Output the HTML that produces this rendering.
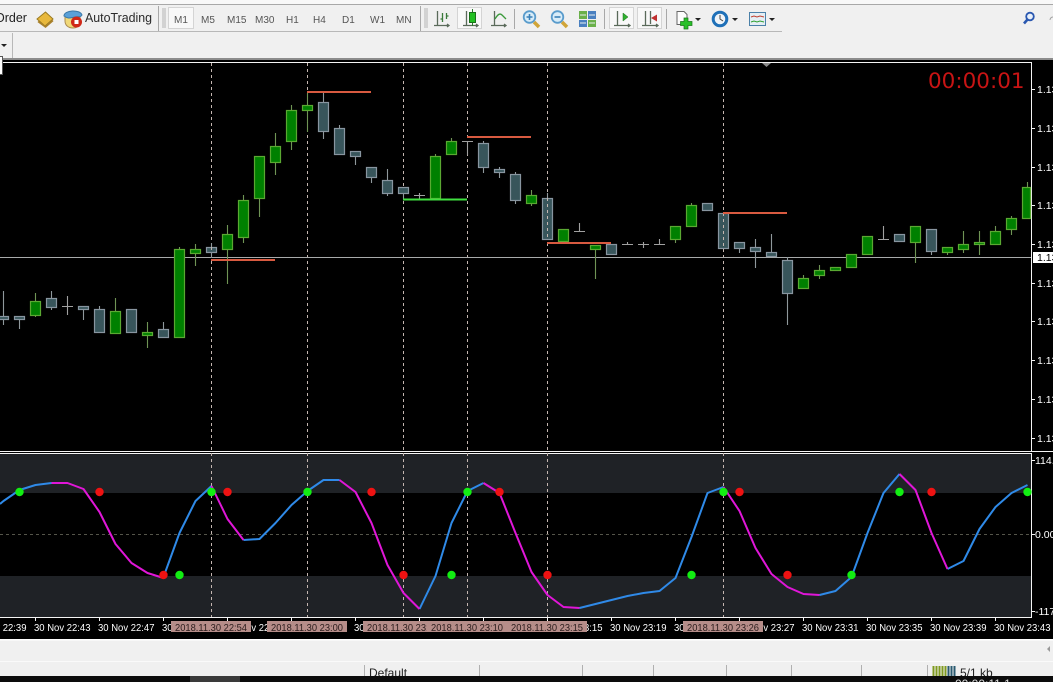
<!DOCTYPE html>
<html><head><meta charset="utf-8"><title>Chart</title>
<style>
html,body{margin:0;padding:0;background:#f0f0f0;width:1053px;height:682px;overflow:hidden}
svg{display:block;position:absolute;left:0;top:0}
.t{font-family:"Liberation Sans",sans-serif}
.w text{font-family:"Liberation Sans",sans-serif;font-size:10.500px;fill:#fff}
.g rect{fill:#008000;stroke:#5aa832;stroke-width:1.200}
.s rect{fill:#38555b;stroke:#8895a0;stroke-width:1.200}
.tb text{font-family:"Liberation Sans",sans-serif;font-size:10px;fill:#555}
</style></head><body>
<svg width="1053" height="682" viewBox="0 0 1053 682" xmlns="http://www.w3.org/2000/svg">
<rect width="1053" height="682" fill="#f0f0f0"/>
<!-- toolbar -->
<rect x="0" y="0" width="1053" height="4" fill="#f8f8f8"/>
<rect x="0" y="4" width="1053" height="1" fill="#a8a8a8"/>
<rect x="0" y="31" width="782" height="1" fill="#b8b8b8"/>
<rect x="158" y="6" width="1" height="25" fill="#a8a8a8"/>
<rect x="420" y="6" width="1" height="25" fill="#a8a8a8"/>
<rect x="12" y="33" width="1" height="25" fill="#b8b8b8"/>
<path d="M1 44h6l-3 3z" fill="#222"/>
<rect x="0" y="58" width="1053" height="2" fill="#8c8c8c"/>
<text x="-5" y="22" class="t" font-size="12.500" fill="#222">Order</text>
<!-- tag icon -->
<path d="M37 19l8.500-7 7.500 7-8 7z" fill="#e8b83c" stroke="#9a7a20"/><path d="M38 21.500l7.500 5.500 7.500-6.500" fill="none" stroke="#a9802a" stroke-width="1.600"/>
<!-- autotrading icon -->
<path d="M65 15c2-4 13-5 15 0v6c-1 5-3 7-7 7-5 0-8-3-8-7z" fill="#f0d878" stroke="#a98a50"/>
<path d="M64 16c0-6 16-7 18-1-2 3-4 1-7 2-5 1-7 2-11-1z" fill="#5aa0d8" stroke="#3a78a8"/>
<circle cx="76.500" cy="22" r="5.500" fill="#d02818"/><rect x="74.500" y="20" width="4" height="4" fill="#fff"/>
<text x="85" y="22" class="t" font-size="12.500" fill="#2a2a2a" textLength="67" lengthAdjust="spacingAndGlyphs">AutoTrading</text>
<!-- grips -->
<path d="M162 9h4M162 11h4M162 13h4M162 15h4M162 17h4M162 19h4M162 21h4M162 23h4M162 25h4M162 27h4M424 9h4M424 11h4M424 13h4M424 15h4M424 17h4M424 19h4M424 21h4M424 23h4M424 25h4M424 27h4" stroke="#b4b4b4"/>
<!-- pressed buttons -->
<g fill="#f8f8f8" stroke="#d4d4d4">
<rect x="168.500" y="7.500" width="25" height="21"/>
<rect x="457.500" y="7.500" width="24" height="21"/>
<rect x="609.500" y="7.500" width="24" height="21"/>
<rect x="637.500" y="7.500" width="24" height="21"/>
</g>
<g class="tb">
<text x="174" y="23">M1</text><text x="201" y="23">M5</text><text x="227" y="23">M15</text><text x="255" y="23">M30</text><text x="286" y="23">H1</text><text x="313" y="23">H4</text><text x="342" y="23">D1</text><text x="370" y="23">W1</text><text x="396" y="23">MN</text>
</g>
<!-- chart type icons -->
<g fill="none">
<path d="M437.500 11v15M434 25.500h15M447 24l2 1.500-2 1.500" stroke="#5a6a5a" stroke-width="1.300"/>
<path d="M442.500 13v9M446.500 13v6M442.500 19h-2M446.500 16h2" stroke="#3a7a3a" stroke-width="1.300"/>
<path d="M466.500 11v15M463 25.500h15M476 24l2 1.500-2 1.500" stroke="#5a6a5a" stroke-width="1.300"/>
<path d="M472.500 9v17" stroke="#2a7a2a"/>
<path d="M494.500 11v15M491 25.500h15M504 24l2 1.500-2 1.500" stroke="#5a6a5a" stroke-width="1.300"/>
<path d="M495 19c3-5 5-6 7-4l4 4" stroke="#3a9a3a" stroke-width="1.300"/>
<path d="M617.500 11v15M614 25.500h16M628 24l2 1.500-2 1.500M645.500 11v15M642 25.500h16M656 24l2 1.500-2 1.500M650.500 11v13" stroke="#5a6a5a" stroke-width="1.300"/>
</g>
<rect x="469.500" y="12.500" width="6" height="10" fill="#22c022" stroke="#1a701a"/>
<path d="M623 13l5 4-5 4z" fill="#30b030" stroke="#1a701a" stroke-width=".5"/>
<path d="M651 18l6-3.500v7z" fill="#c03030"/>
<rect x="514" y="9" width="1" height="20" fill="#a8a8a8"/><rect x="604" y="9" width="1" height="20" fill="#a8a8a8"/><rect x="666" y="9" width="1" height="20" fill="#a8a8a8"/>
<!-- zoom icons -->
<g>
<path d="M534 22l5 5" stroke="#d0a438" stroke-width="3.500"/>
<circle cx="529.500" cy="17" r="5.800" fill="#d8ecf8" stroke="#5a9ccc" stroke-width="1.800"/>
<path d="M526.500 17h6M529.500 14v6" stroke="#3a80b8" stroke-width="1.600"/>
<path d="M562 22l5 5" stroke="#d0a438" stroke-width="3.500"/>
<circle cx="557.500" cy="17" r="5.800" fill="#d8ecf8" stroke="#5a9ccc" stroke-width="1.800"/>
<path d="M554.500 17h6" stroke="#3a80b8" stroke-width="1.600"/>
</g>
<!-- tile icon -->
<rect x="579" y="11" width="8" height="8" fill="#6ab04a"/><rect x="588" y="11" width="8" height="8" fill="#4a80c0"/><rect x="579" y="20" width="8" height="7" fill="#4a80c0"/><rect x="588" y="20" width="8" height="7" fill="#6ab04a"/>
<path d="M580 15h6M589 15h6M580 23h6M589 23h6" stroke="#e8f0f0"/>
<!-- new chart -->
<path d="M677 11.500h7l3 3v10h-10z" fill="#fdfdfd" stroke="#666"/>
<path d="M684 18h4v3.500h4v4h-4v3.500h-4v-3.500h-3.500v-4h3.500z" fill="#28c028" stroke="#187818" stroke-width=".7"/>
<path d="M695 18h6l-3 3z" fill="#222"/>
<!-- clock -->
<circle cx="720" cy="19" r="6.800" fill="#f0f4f8" stroke="#1f70b8" stroke-width="3"/><path d="M720 15v4l3 2" stroke="#444" fill="none"/>
<path d="M732 18h6l-3 3z" fill="#222"/>
<!-- template -->
<rect x="749.500" y="12.500" width="16" height="13" fill="#e4eef4" stroke="#4a80a8"/><path d="M751 17l3-1 3 1 3-1 4 1" stroke="#c04030" fill="none"/><path d="M751 22l3-1 3 1 3-1 4 1" stroke="#30a030" fill="none"/>
<path d="M769 18h6l-3 3z" fill="#222"/>
<!-- search -->
<circle cx="1030" cy="16.500" r="3.800" fill="#e8f0fa" stroke="#2a58b0" stroke-width="1.800"/><path d="M1027.500 19.500l-3.500 4" stroke="#2a58b0" stroke-width="2.600"/>
<path d="M1050 20a3 3 0 0 1 3-3" stroke="#a0a0a0" fill="none"/>
<!-- chart -->
<rect x="0" y="60" width="1053" height="580" fill="#000"/>
<rect x="0" y="62" width="1032" height="1" fill="#f4f4f4"/>
<rect x="1031" y="62" width="1" height="389" fill="#f4f4f4"/>
<rect x="0" y="451" width="1053" height="1" fill="#f4f4f4"/>
<rect x="0" y="453" width="1032" height="1" fill="#f4f4f4"/>
<path d="M762 63h9l-4.500 4z" fill="#8a8a8a"/>
<rect x="-1" y="56.500" width="3.500" height="18" fill="#fff" stroke="#555"/>
<!-- indicator bg -->
<rect x="0" y="454" width="1031" height="39" fill="#1f2226"/>
<rect x="0" y="576" width="1031" height="41" fill="#1f2226"/>
<rect x="1031" y="453" width="1" height="165" fill="#f4f4f4"/>
<rect x="0" y="617" width="1032" height="1" fill="#f4f4f4"/>
<path d="M0 534.500h1031" stroke="#55554a" stroke-dasharray="3 3"/>
<!-- vlines -->
<path d="M211.500 63V617M307.500 63V617M403.500 63V617M467.500 63V617M547.500 63V617M723.500 63V617" stroke="#c4b6b0" stroke-dasharray="3 3"/>
<!-- price line -->
<rect x="0" y="257" width="1031" height="1" fill="#a8aaaa"/>
<!-- wicks -->
<path stroke="#6f9455" stroke-width="1.100" fill="none" d="M35.500 293V317M115.500 298V333M147.500 322V348M179.500 247V338M195.500 244V266M227.500 225V284M243.500 195V243M259.500 156V217M275.500 133V175M291.500 105V150M307.500 93V132M435.500 154V198M451.500 138V155M531.500 190V206M595.500 245V279M675.500 226V243M691.500 203V227M803.500 275V288M819.500 265V279M915.500 226V263M947.500 247V255M963.500 231V253M979.500 231V255M995.500 226V244M1011.500 216V235M1027.500 182V218"/>
<path stroke="#8f989c" stroke-width="1.100" fill="none" d="M3.500 291V325M19.500 316V329M51.500 291V310M83.500 306V320M99.500 306V333M163.500 322V338M211.500 243V258M323.500 93V139M339.500 125V155M355.500 151V165M371.500 167V183M387.500 169V196M403.500 187V199M483.500 141V173M499.500 167V178M515.500 172V204M547.500 193V240M739.500 242V253M755.500 239V268M771.500 234V257M787.500 257V325M931.500 229V255"/>
<path stroke="#a0a0a0" stroke-width="1.100" fill="none" d="M67.500 296V315M62 306.500H73M419.500 193V199M414 195.500H425M467.500 141V155M462 141.500H473M579.500 223V231M574 231.500H585M627.500 242V244M622 244.500H633M643.500 242V248M638 244.500H649M659.500 239V244M654 244.500H665M883.500 226V239M878 239.500H889"/>
<!-- green bodies -->
<g class="g">
<rect x="30.500" y="301.500" width="10" height="14"/><rect x="110.500" y="311.500" width="10" height="22"/><rect x="142.500" y="332.500" width="10" height="3"/><rect x="174.500" y="249.500" width="10" height="88"/><rect x="190.500" y="249.500" width="10" height="4"/><rect x="222.500" y="234.500" width="10" height="15"/><rect x="238.500" y="200.500" width="10" height="37"/><rect x="254.500" y="156.500" width="10" height="42"/><rect x="270.500" y="146.500" width="10" height="16"/><rect x="286.500" y="110.500" width="10" height="31"/><rect x="302.500" y="105.500" width="10" height="5"/><rect x="430.500" y="156.500" width="10" height="42"/><rect x="446.500" y="141.500" width="10" height="13"/><rect x="526.500" y="195.500" width="10" height="8"/><rect x="558.500" y="229.500" width="10" height="12"/><rect x="590.500" y="245.500" width="10" height="4"/><rect x="670.500" y="226.500" width="10" height="13"/><rect x="686.500" y="205.500" width="10" height="21"/><rect x="798.500" y="278.500" width="10" height="10"/><rect x="814.500" y="270.500" width="10" height="5"/><rect x="830.500" y="267.500" width="10" height="3"/><rect x="846.500" y="254.500" width="10" height="13"/><rect x="862.500" y="236.500" width="10" height="18"/><rect x="910.500" y="226.500" width="10" height="16"/><rect x="942.500" y="247.500" width="10" height="5"/><rect x="958.500" y="244.500" width="10" height="5"/><rect x="974.500" y="242.500" width="10" height="2"/><rect x="990.500" y="231.500" width="10" height="13"/><rect x="1006.500" y="218.500" width="10" height="11"/><rect x="1022.500" y="187.500" width="8" height="31"/>
</g>
<!-- grey bodies -->
<g class="s">
<rect x="-1.500" y="316.500" width="10" height="3"/><rect x="14.500" y="316.500" width="10" height="3"/><rect x="46.500" y="298.500" width="10" height="9"/><rect x="78.500" y="306.500" width="10" height="3"/><rect x="94.500" y="309.500" width="10" height="23"/><rect x="126.500" y="309.500" width="10" height="23"/><rect x="158.500" y="329.500" width="10" height="8"/><rect x="206.500" y="247.500" width="10" height="5"/><rect x="318.500" y="102.500" width="10" height="29"/><rect x="334.500" y="128.500" width="10" height="26"/><rect x="350.500" y="151.500" width="10" height="5"/><rect x="366.500" y="167.500" width="10" height="10"/><rect x="382.500" y="180.500" width="10" height="13"/><rect x="398.500" y="187.500" width="10" height="6"/><rect x="478.500" y="143.500" width="10" height="24"/><rect x="494.500" y="169.500" width="10" height="3"/><rect x="510.500" y="174.500" width="10" height="26"/><rect x="542.500" y="198.500" width="10" height="41"/><rect x="606.500" y="244.500" width="10" height="10"/><rect x="702.500" y="203.500" width="10" height="7"/><rect x="718.500" y="213.500" width="10" height="35"/><rect x="734.500" y="242.500" width="10" height="6"/><rect x="750.500" y="247.500" width="10" height="4"/><rect x="766.500" y="252.500" width="10" height="4"/><rect x="782.500" y="260.500" width="10" height="33"/><rect x="894.500" y="234.500" width="10" height="7"/><rect x="926.500" y="229.500" width="10" height="22"/>
</g>
<path d="M211.500 247V253M547.500 198V240M723.500 213V249" stroke="#c4b6b0" stroke-dasharray="3 3"/>
<!-- trend lines -->
<g stroke-width="2">
<path d="M307 92H371M467 137H531M723 213H787M547 243H611M211 260H275" stroke="#d85a40"/>
<path d="M403 199.500H467" stroke="#40e040"/>
</g>
<!-- osc -->
<g fill="none" stroke-width="2" stroke-linejoin="round">
<g stroke="#2f8ae8">
<polyline points="0,504 3.500,501 19.500,490 35.500,485 51.500,483"/>
<polyline points="163.500,577 179.500,533 195.500,501 211.500,486"/>
<polyline points="243.500,540 259.500,539 275.500,523 291.500,505 307.500,491 323.500,480 339.500,480"/>
<polyline points="419.500,609 435.500,576 451.500,523 467.500,491 483.500,483"/>
<polyline points="579.500,608 595.500,604 611.500,600 627.500,596 643.500,593 659.500,591 675.500,578 691.500,537 707.500,493 723.500,487"/>
<polyline points="819.500,595 835.500,591 851.500,577 867.500,533 883.500,493 899.500,474"/>
<polyline points="947.500,569 963.500,561 979.500,529 995.500,507 1011.500,493 1027.500,485"/>
</g>
<g stroke="#e016d8">
<polyline points="51.500,483 67.500,483 83.500,489 99.500,512 115.500,544 131.500,563 147.500,573 163.500,578"/>
<polyline points="211.500,486 227.500,519 243.500,540"/>
<polyline points="339.500,480 355.500,492 371.500,523 387.500,565 403.500,593 419.500,609"/>
<polyline points="483.500,483 499.500,493 515.500,533 531.500,572 547.500,595 563.500,607 579.500,608"/>
<polyline points="723.500,487 739.500,511 755.500,548 771.500,574 787.500,587 803.500,594 819.500,595"/>
<polyline points="899.500,474 915.500,490 931.500,533 947.500,569"/>
</g>
</g>
<!-- dots -->
<g fill="#12ee12">
<circle cx="19.500" cy="492" r="4.200"/><circle cx="179.500" cy="575" r="4.200"/><circle cx="211.500" cy="492" r="4.200"/><circle cx="307.500" cy="492" r="4.200"/><circle cx="451.500" cy="575" r="4.200"/><circle cx="467.500" cy="492" r="4.200"/><circle cx="691.500" cy="575" r="4.200"/><circle cx="723.500" cy="492" r="4.200"/><circle cx="851.500" cy="575" r="4.200"/><circle cx="899.500" cy="492" r="4.200"/><circle cx="1027.500" cy="492" r="4.200"/>
</g>
<g fill="#ee1212">
<circle cx="99.500" cy="492" r="4.200"/><circle cx="163.500" cy="575" r="4.200"/><circle cx="227.500" cy="492" r="4.200"/><circle cx="371.500" cy="492" r="4.200"/><circle cx="403.500" cy="575" r="4.200"/><circle cx="499.500" cy="492" r="4.200"/><circle cx="547.500" cy="575" r="4.200"/><circle cx="739.500" cy="492" r="4.200"/><circle cx="787.500" cy="575" r="4.200"/><circle cx="931.500" cy="492" r="4.200"/>
</g>
<!-- timer -->
<text x="928" y="88" font-family="DejaVu Sans,sans-serif" font-size="21.500" fill="#c81414">00:00:01</text>
<!-- axis -->
<path d="M1032 89.500h3M1032 128.500h3M1032 167.500h3M1032 205.500h3M1032 244.500h3M1032 283.500h3M1032 321.500h3M1032 360.500h3M1032 399.500h3M1032 438.500h3M1032 460.500h3M1032 534.500h3M1032 611.500h3" stroke="#f4f4f4"/>
<g class="w">
<text x="1037" y="93">1.13</text><text x="1037" y="132">1.13</text><text x="1037" y="171">1.13</text><text x="1037" y="209">1.13</text><text x="1037" y="248">1.13</text><text x="1037" y="287">1.13</text><text x="1037" y="325">1.13</text><text x="1037" y="364">1.13</text><text x="1037" y="403">1.13</text><text x="1037" y="442">1.13</text>
<text x="1035" y="464">114.</text><text x="1035" y="538">0.00</text><text x="1035" y="615">-117</text>
</g>
<rect x="1033" y="252" width="20" height="11" fill="#fff"/>
<text x="1037" y="261" class="t" font-size="10.500" fill="#000">1.13</text>
<!-- time axis -->
<path d="M35.500 618v3M99.500 618v3M163.500 618v3M227.500 618v3M291.500 618v3M355.500 618v3M419.500 618v3M483.500 618v3M547.500 618v3M611.500 618v3M675.500 618v3M739.500 618v3M803.500 618v3M867.500 618v3M931.500 618v3M995.500 618v3" stroke="#f4f4f4"/>
<g class="w">
<text x="-30" y="631" textLength="56.500" lengthAdjust="spacingAndGlyphs">30 Nov 22:39</text><text x="34" y="631" textLength="56.500" lengthAdjust="spacingAndGlyphs">30 Nov 22:43</text><text x="98" y="631" textLength="56.500" lengthAdjust="spacingAndGlyphs">30 Nov 22:47</text><text x="162" y="631" textLength="56.500" lengthAdjust="spacingAndGlyphs">30 Nov 22:51</text><text x="226" y="631" textLength="56.500" lengthAdjust="spacingAndGlyphs">30 Nov 22:55</text><text x="354" y="631" textLength="56.500" lengthAdjust="spacingAndGlyphs">30 Nov 23:03</text><text x="546" y="631" textLength="56.500" lengthAdjust="spacingAndGlyphs">30 Nov 23:15</text><text x="610" y="631" textLength="56.500" lengthAdjust="spacingAndGlyphs">30 Nov 23:19</text><text x="674" y="631" textLength="56.500" lengthAdjust="spacingAndGlyphs">30 Nov 23:23</text><text x="738" y="631" textLength="56.500" lengthAdjust="spacingAndGlyphs">30 Nov 23:27</text><text x="802" y="631" textLength="56.500" lengthAdjust="spacingAndGlyphs">30 Nov 23:31</text><text x="866" y="631" textLength="56.500" lengthAdjust="spacingAndGlyphs">30 Nov 23:35</text><text x="930" y="631" textLength="56.500" lengthAdjust="spacingAndGlyphs">30 Nov 23:39</text><text x="994" y="631" textLength="56.500" lengthAdjust="spacingAndGlyphs">30 Nov 23:43</text>
</g>
<g font-family="Liberation Sans,sans-serif" font-size="10.500" fill="#2a1c1c">
<rect x="171" y="621" width="80" height="11" fill="#b68d89"/><text x="175" y="631" textLength="72" lengthAdjust="spacingAndGlyphs">2018.11.30 22:54</text>
<rect x="267" y="621" width="80" height="11" fill="#b68d89"/><text x="271" y="631" textLength="72" lengthAdjust="spacingAndGlyphs">2018.11.30 23:00</text>
<rect x="363" y="621" width="80" height="11" fill="#b68d89"/><text x="367" y="631" textLength="72" lengthAdjust="spacingAndGlyphs">2018.11.30 23:06</text>
<rect x="427" y="621" width="80" height="11" fill="#b68d89"/><text x="431" y="631" textLength="72" lengthAdjust="spacingAndGlyphs">2018.11.30 23:10</text>
<rect x="507" y="621" width="80" height="11" fill="#b68d89"/><text x="511" y="631" textLength="72" lengthAdjust="spacingAndGlyphs">2018.11.30 23:15</text>
<rect x="683" y="621" width="80" height="11" fill="#b68d89"/><text x="687" y="631" textLength="72" lengthAdjust="spacingAndGlyphs">2018.11.30 23:26</text>
</g>
<!-- bottom -->
<rect x="0" y="639" width="1053" height="1.500" fill="#fff"/>
<rect x="0" y="641" width="1053" height="35" fill="#f0f0f0"/>
<rect x="0" y="661" width="1053" height="1" fill="#fafafa"/>
<path d="M1050 646v6l-3-3z" fill="#999"/>
<path d="M364.500 665V676M479.500 665V676M582.500 665V676M653.500 665V676M726.500 665V676M791.500 665V676M861.500 665V676M927.500 665V676" stroke="#b0b0b0"/>
<text x="369" y="677" class="t" font-size="12" fill="#222">Default</text>
<text x="960" y="677" class="t" font-size="12" fill="#222">5/1 kb</text>
<path d="M933.500 666v10M936.500 666v10M939.500 666v10M942.500 666v10M945.500 666v10" stroke="#7f9a20" stroke-width="2"/>
<path d="M948.500 666v10M951.500 666v10M954.500 666v10" stroke="#2a5a70" stroke-width="2"/>
<rect x="0" y="676" width="1053" height="6" fill="#0c0c0c"/>
<rect x="190" y="676" width="50" height="6" fill="#3a3a3a"/>
<text x="955" y="688" class="t" font-size="12" fill="#ddd">00:00:11 1</text>
</svg>
</body></html>
